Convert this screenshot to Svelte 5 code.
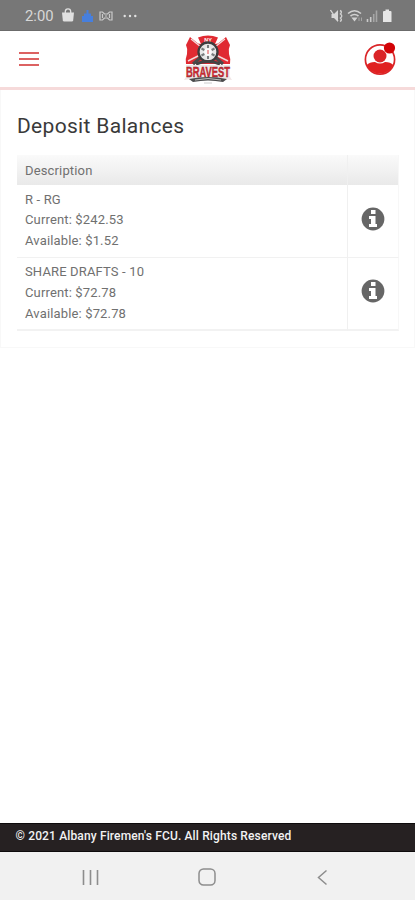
<script lang="ts">
  type Account = { name: string; current: string; available: string };

  const accounts: Account[] = [
    { name: 'R - RG', current: '$242.53', available: '$1.52' },
    { name: 'SHARE DRAFTS - 10', current: '$72.78', available: '$72.78' },
  ];
</script>

<div class="screen">
  <div class="status-bar">
    <div class="status-left">
      <span class="clock">2:00</span>
      <svg class="bag" width="14" height="14" viewBox="0 0 14 14">
        <path d="M1 4.500h12l-.8 7.700q-.2 1.300-1.400 1.300H3.200q-1.200 0-1.400-1.300z" fill="#e0e0e0" />
        <path d="M4.300 6V3.600a2.700 2.700 0 0 1 5.400 0V6" fill="none" stroke="#e0e0e0" stroke-width="1.300" />
      </svg>
      <svg class="cloud" width="13" height="14" viewBox="0 0 13 14">
        <path d="M5.500 1h2v3.500h2.500v2.500h2v6H1V7h2V4.500h2.500z" fill="#477fdd" />
      </svg>
      <svg class="bridge" width="14" height="12" viewBox="0 0 14 12" fill="none" stroke="#cacaca" stroke-width="1.200">
        <path d="M1 10V2h2.500L5.500 4h3l2-2H13v8h-2.500l-2-2h-3l-2 2zM3.500 4v4M10.500 4v4M6 6h2" />
      </svg>
      <svg class="dots" width="14" height="4" viewBox="0 0 14 4" fill="#e2e2e2">
        <circle cx="1.700" cy="2" r="1.200" /><circle cx="7" cy="2" r="1.200" /><circle cx="12.300" cy="2" r="1.200" />
      </svg>
    </div>
    <svg class="status-right" width="62" height="16" viewBox="0 0 62 16">
      <path d="M1.500 6H4l4-4v12l-4-4H1.500z" fill="#d8d8d8" />
      <path d="M.5 2l7.500 11" stroke="#d8d8d8" stroke-width="1.300" />
      <path d="M10 2.500q2.500 1 .5 3.500 2.500 2 0 4 2 2-.5 3.500" fill="none" stroke="#d0d0d0" stroke-width="1.400" />
      <g fill="none" stroke="#d2d2d2" stroke-width="1.600">
        <path d="M18 5.500q6.500-5.500 13 0M20.500 8q4-3 8 0" />
        <path d="M23 10.200h3l-1.500 2z" fill="#d2d2d2" />
      </g>
      <path d="M29 9.500V13M31.500 9.500V13" stroke="#a6a6a6" />
      <path d="M37.500 11v3M40.700 9v5" stroke="#cacaca" stroke-width="1.600" />
      <path d="M43.700 6v8M46.500 2.500V14" stroke="#a6a6a6" stroke-width="1.600" />
      <path d="M54 3h1.500V1.500h3.500V3h1.500q1 0 1 1v10h-8.500V4q0-1 1-1z" fill="#e6e6e6" />
    </svg>
  </div>

  <header class="app-bar">
    <button class="menu" aria-label="Menu">
      <span></span><span></span><span></span>
    </button>
    <svg class="logo" width="48" height="50" viewBox="0 0 48 50">
      <path
        d="M14 2.500q10-4 20 0L31 9l3-.5L42 2l4 8q-2 4-1 9 2 5 1 10H2q-1-5 1-10 1-5-1-9l4-8 8 6.500 3 .5z"
        fill="#e02a32"
      />
      <text x="24" y="6.700" text-anchor="middle" class="logo-top">NY</text>
      <path d="M7 4l10 8M41 4l-10 8" stroke="#f3dada" stroke-width="1.300" />
      <path d="M4 26l12-6M44 26l-12-6" stroke="#f1d7d7" stroke-width="1.500" />
      <path d="M9 29l8-7M39 29l-8-7" stroke="#4a4a4a" stroke-width="3" />
      <circle cx="24" cy="17" r="9.500" fill="#e7e7e7" stroke="#3c3d3e" stroke-width="2.300" />
      <path d="M24 10v14M17.500 13.500l13 7M30.500 13.500l-13 7" stroke="#777b7c" stroke-width="2" />
      <circle cx="24" cy="17" r="4" fill="#fafafa" />
      <path d="M24 15v4" stroke="#d44" />
      <path d="M12 29q12-5 24 0" fill="none" stroke="#444" stroke-width="3" />
      <path d="M2 30h44l-.5 11 2.500 4-12-1.500q-12 1-24 0L0 45l2.500-4z" fill="#f1e6e6" />
      <text x="24" y="41.500" text-anchor="middle" textLength="44" lengthAdjust="spacingAndGlyphs" class="logo-name">BRAVEST</text>
      <path d="M5 44q19-4 38 0l-4 3q-15-3-30 0z" fill="#4b4c4d" />
      <path d="M11 45q13-3 26 0" fill="none" stroke="#d9d9d9" stroke-width=".8" />
      <path d="M20 48h8" stroke="#ccc" />
    </svg>
    <svg class="profile" width="34" height="34" viewBox="0 0 34 34">
      <circle cx="17" cy="17.500" r="14.600" fill="#fff" stroke="#da2528" stroke-width="1.700" />
      <circle cx="17" cy="14" r="6.500" fill="#da2528" />
      <path d="M3.700 23q3-3.200 8.300-3.100 5 3.200 10 0 5.300-.1 8.300 3.100A14.600 14.600 0 0 1 3.700 23z" fill="#e02020" />
      <circle cx="26.500" cy="6" r="5.600" fill="#d20306" />
    </svg>
  </header>

  <main class="panel">
    <h1>Deposit Balances</h1>
    <table>
      <thead>
        <tr><th>Description</th><th class="info-col" aria-label="Details"></th></tr>
      </thead>
      <tbody>
        {#each accounts as account}
          <tr>
            <td>
              <div>{account.name}</div>
              <div>Current: {account.current}</div>
              <div>Available: {account.available}</div>
            </td>
            <td class="info-col">
              <svg width="24" height="24" viewBox="0 0 24 24">
                <circle cx="12" cy="12" r="11.400" fill="#666" />
                <path d="M10 3h4.500v4H10zM8 9h6.500v8H16v3H8v-3h2v-5H8z" fill="#fff" />
              </svg>
            </td>
          </tr>
        {/each}
      </tbody>
    </table>
  </main>

  <footer>© 2021 Albany Firemen's FCU. All Rights Reserved</footer>

  <nav class="system-nav">
    <svg width="17" height="17" viewBox="0 0 17 17" stroke="#8d8d8d" stroke-width="1.600">
      <path d="M1.500 1v15M8.500 1v15M15.500 1v15" />
    </svg>
    <svg width="18" height="18" viewBox="0 0 18 18" fill="none" stroke="#8d8d8d" stroke-width="1.500">
      <rect x="1" y="1" width="16" height="16" rx="4.500" />
    </svg>
    <svg width="17" height="17" viewBox="0 0 17 17" fill="none" stroke="#8d8d8d" stroke-width="1.500">
      <path d="M12.500 1.500l-8 7 8 7" />
    </svg>
  </nav>
</div>

<style>
  :global(body) {
    background: #fff;
  }

  .screen {
    display: flex;
    flex-direction: column;
    height: 900px;
    overflow: hidden;
    font-family: Roboto, 'Liberation Sans', sans-serif;
    color: #707070;
  }

  .screen * {
    box-sizing: border-box;
  }

  svg {
    display: block;
    flex-shrink: 0;
  }

  .status-bar {
    display: flex;
    justify-content: space-between;
    align-items: center;
    flex-shrink: 0;
    height: 31px;
    padding: 1px 23px 0 25px;
    background: #777;
    border-bottom: 1px solid #6b6b6b;
  }

  .status-left {
    display: flex;
    align-items: center;
  }

  .clock {
    width: 36px;
    font-size: 14.8px;
    line-height: 17px;
    padding-top: 1px;
    color: #d8d8d8;
    white-space: nowrap;
  }

  .bag {
    margin-bottom: 1px;
  }

  .cloud {
    margin-left: 6px;
  }

  .bridge {
    margin-left: 5px;
  }

  .dots {
    margin-left: 10px;
  }

  .app-bar {
    display: flex;
    justify-content: space-between;
    align-items: center;
    flex-shrink: 0;
    height: 59px;
    padding: 0 18px 1px 19px;
    border-bottom: 3px solid #f6dada;
  }

  .menu {
    display: flex;
    flex-direction: column;
    gap: 4px;
    width: 34px;
    padding: 0;
    border: 0;
    background: none;
  }

  .menu span {
    width: 20px;
    height: 2px;
    background: #dc6262;
  }

  .logo {
    margin-top: 2px;
    overflow: visible;
  }

  .logo-top {
    font: bold 5.5px 'Liberation Sans', sans-serif;
    fill: #fff;
  }

  .logo-name {
    font: bold 15px 'Liberation Sans', sans-serif;
    fill: #df2831;
    stroke: #66262a;
    stroke-width: 0.4px;
  }

  .profile {
    margin-top: 1px;
  }

  .panel {
    flex-shrink: 0;
    height: 258px;
    padding: 24px 16px 0 16px;
    border: 1px solid #f8f8f8;
    border-top: 0;
  }

  h1 {
    margin: 0 0 16px;
    font-size: 21px;
    font-weight: 400;
    line-height: 25px;
    letter-spacing: 0.32px;
    color: #3a3a3a;
  }

  table {
    width: 382px;
    border-collapse: separate;
    border-spacing: 0;
    table-layout: fixed;
    font-size: 13px;
    line-height: 20.7px;
    letter-spacing: 0.15px;
  }

  th {
    height: 30px;
    padding: 2px 8px 0;
    font-weight: 400;
    text-align: left;
    background: linear-gradient(#fafafa, #e9e9e9);
  }

  td {
    height: 72.5px;
    padding: 4.5px 8px 5px;
    border-bottom: 1px solid #f1f1f1;
    vertical-align: top;
  }

  tbody tr:last-child td {
    border-bottom: 2px solid #f2f2f2;
  }

  .info-col {
    width: 52px;
    padding: 0 14px 4px 13px;
    border-left: 1px solid #f0f0f0;
    border-right: 1px solid #f7f7f7;
    vertical-align: middle;
  }

  footer {
    flex-shrink: 0;
    height: 29px;
    margin-top: auto;
    padding-left: 15.5px;
    background: #262122;
    border: solid #0e0b0c;
    border-width: 1px 0;
    font-size: 12px;
    font-weight: 500;
    line-height: 24px;
    letter-spacing: 0.14px;
    color: #f2f2f2;
  }

  .system-nav {
    display: flex;
    justify-content: space-between;
    align-items: center;
    flex-shrink: 0;
    height: 48px;
    padding: 2px 84px 0 82px;
    background: #f1f1f1;
  }
</style>
